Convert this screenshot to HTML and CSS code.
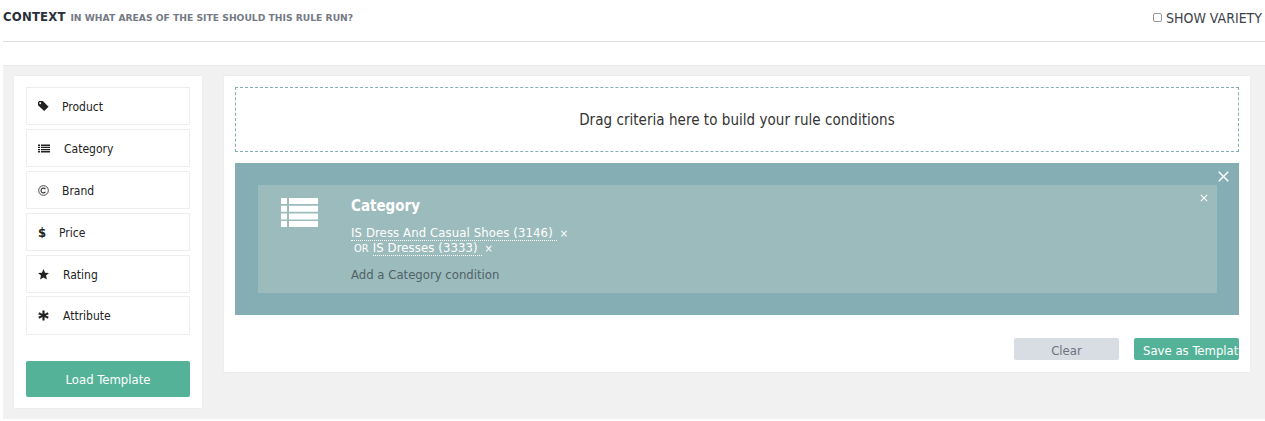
FILE: index.html
```html
<!DOCTYPE html>
<html lang="en">
<head>
<meta charset="utf-8">
<title>Context</title>
<link rel="stylesheet" href="styles.css">
</head>
<body>
<div class="page">
  <header class="head">
    <div class="title"><strong>CONTEXT</strong> <span class="sub">IN WHAT AREAS OF THE SITE SHOULD THIS RULE RUN?</span></div>
    <label class="variety"><span class="check"></span>SHOW VARIETY</label>
  </header>
  <section class="stage">
    <aside class="side">
      <div class="item"><svg class="ico" viewBox="0 0 10 10"><path d="M0 1.2 1.2 0H4.4L9.6 5.2 5.6 9.2 0 3.9ZM2 1.200a.8.8 0 1 0 .01 0Z" fill-rule="evenodd"/></svg><span class="lbl l-product">Product</span></div>
      <div class="item"><svg class="ico wide" viewBox="0 0 12 9"><path d="M0 1h2v1.4H0zM3 1h9v1.4H3zM0 3.2h2v1.4H0zM3 3.2h9v1.4H3zM0 5.4h2v1.4H0zM3 5.4h9v1.4H3zM0 7.6h2V9H0zM3 7.6h9V9H3z"/></svg><span class="lbl l-category">Category</span></div>
      <div class="item"><svg class="ico" viewBox="0 0 10 10"><circle cx="5" cy="5" r="4.4" fill="none" stroke="#333" stroke-width=".8"/><path d="M6.800 3.800A2.200 2.200 0 1 0 6.800 6.200" fill="none" stroke="#333"/></svg><span class="lbl l-product">Brand</span></div>
      <div class="item"><span class="dollar">$</span><span class="lbl l-price">Price</span></div>
      <div class="item"><svg class="ico" viewBox="0 0 10 10"><path d="M5 0 6.400 3.300 10 3.700 7.300 6 8.100 9.600 5 7.700 1.900 9.600 2.700 6 0 3.700 3.600 3.300Z"/></svg><span class="lbl l-rating">Rating</span></div>
      <div class="item item-last"><svg class="ico" viewBox="0 0 10 10"><path d="M4 .5h2v3.1l2.800-1.500 1 1.800L7 5l2.800 1.100-1 1.800L6 6.400V9.500H4V6.400L1.200 7.900l-1-1.800L3 5 .2 3.900l1-1.800L4 3.600Z"/></svg><span class="lbl l-rating">Attribute</span></div>
      <button class="load" type="button">Load Template</button>
    </aside>
    <main class="panel">
      <div class="drop">Drag criteria here to build your rule conditions</div>
      <div class="outer">
        <svg class="close big" viewBox="0 0 10 10"><path d="M.7.7 9.300 9.300M9.300.7.7 9.300"/></svg>
        <div class="inner">
          <svg class="close small" viewBox="0 0 10 10"><path d="M1 1 9 9M9 1 1 9"/></svg>
          <svg class="list-ico" viewBox="0 0 37 29"><path fill="#fff" d="M0 0h6v6H0zM8 0h29v6H8zM0 7.700h6v6H0zM8 7.700h29v6H8zM0 15.400h6v6H0zM8 15.400h29v6H8zM0 23h6v6H0zM8 23h29v6H8z"/></svg>
          <div class="rule">
            <h3 class="rule-name">Category</h3>
            <div class="cond"><a class="val">IS Dress And Casual Shoes (3146)&nbsp;</a><span class="x">&times;</span></div>
            <div class="cond"><span class="or">OR</span><a class="val">IS Dresses (3333)&nbsp;</a><span class="x">&times;</span></div>
            <div class="add">Add a Category condition</div>
          </div>
        </div>
      </div>
      <div class="actions">
        <button class="btn clear" type="button">Clear</button>
        <button class="btn save" type="button"><span>Save as Template</span></button>
      </div>
    </main>
  </section>
</div>
</body>
</html>
```
FILE: styles.css
```css
* { box-sizing: border-box; }
html, body { margin: 0; background: #fff; }
body { font-family: "DejaVu Sans", Verdana, sans-serif; font-stretch: condensed; color: #222; font-size: 13px; height: 421px; overflow: hidden; }
.page { padding-left: 3px; }
.head { height: 42px; border-bottom: 1px solid #ddd; display: flex; justify-content: space-between; padding-top: 9px; }
.title { line-height: 16px; }
.title strong { font-size: 13px; font-weight: 700; color: #2a2f3a; letter-spacing: .2px; margin-right: 1px; }
.sub { font-size: 9.200px; font-weight: 700; color: #757a85; font-stretch: normal; }
.variety { display: flex; align-items: flex-start; font-size: 14px; line-height: 18px; color: #3c3f4a; padding-right: 3px; white-space: nowrap; }
.check { width: 9px; height: 9px; border: 1px solid #999; border-radius: 2px; margin: 4px 4px 0 0; }
.stage { margin-top: 23px; height: 354px; background: #f1f1f1; border-top: 1px solid #e8e8e8; display: flex; align-items: flex-start; padding: 10px 15px 0 11px; gap: 22px; }
.side { width: 188px; height: 332px; background: #fff; box-shadow: 0 0 2px #e6e6e6; padding: 11px 12px 0; flex: none; display: flex; flex-direction: column; gap: 4px; }
.item { height: 38px; border: 1px solid #eee; display: flex; align-items: center; padding-left: 11px; font-size: 12px; color: #222; }
.item-last { height: 39px; margin-top: -1px; }
.ico { width: 11px; height: 11px; fill: #222; flex: none; }
.ico.wide { width: 12px; height: 10px; }
.dollar { width: 11px; font-size: 13px; font-weight: 700; color: #222; }
.lbl { margin-left: 13px; padding-top: 1px; }
.l-category { margin-left: 14px; }
.l-price { margin-left: 10px; }
.l-rating { margin-left: 14px; }
.load { margin-top: 22px; height: 36px; border: 0; border-radius: 2px; background: #54b298; color: #fff; font: 13px "DejaVu Sans", sans-serif; font-stretch: condensed; padding: 0; }
.panel { flex: 1; height: 296px; background: #fff; box-shadow: 0 0 2px #e6e6e6; padding: 11px 11px 0; }
.drop { height: 65px; border: 1px dashed #84aeb3; display: flex; align-items: center; justify-content: center; font-size: 15px; color: #333; letter-spacing: .04px; }
.outer { position: relative; margin-top: 11px; height: 152px; background: #84aeb3; padding: 22px 22px 0 23px; }
.inner { position: relative; height: 108px; background: #9cbbbd; display: flex; padding: 13px 0 0 23px; color: #fff; }
.close { position: absolute; fill: none; stroke: #fff; stroke-width: 1.400; }
.big { top: 8px; right: 10px; width: 11px; height: 11px; }
.small { top: 9px; right: 9px; width: 8px; height: 8px; }
.list-ico { width: 37px; height: 29px; flex: none; }
.rule { margin-left: 33px; }
.rule-name { margin: 0 0 11px; font-size: 15px; line-height: 16px; font-weight: 700; color: #fff; }
.cond { line-height: 15px; white-space: nowrap; }
.val { color: #fff; border-bottom: 1px dotted #fff; letter-spacing: .1px; }
.x { margin-left: 3px; font-size: 11px; line-height: 1; }
.or { font-size: 11px; line-height: 1; margin: 0 4px 0 3px; }
.add { margin-top: 12px; color: #4f6265; }
.actions { display: flex; justify-content: flex-end; gap: 15px; margin-top: 23px; }
.btn { width: 105px; height: 22px; border: 0; border-radius: 2px; font: 13px "DejaVu Sans", sans-serif; font-stretch: condensed; padding: 2px 0 0; }
.clear { background: #d7dde3; color: #6e7280; }
.save { background: #54b298; color: #fff; overflow: hidden; text-align: left; padding-left: 9px; white-space: nowrap; }
```
